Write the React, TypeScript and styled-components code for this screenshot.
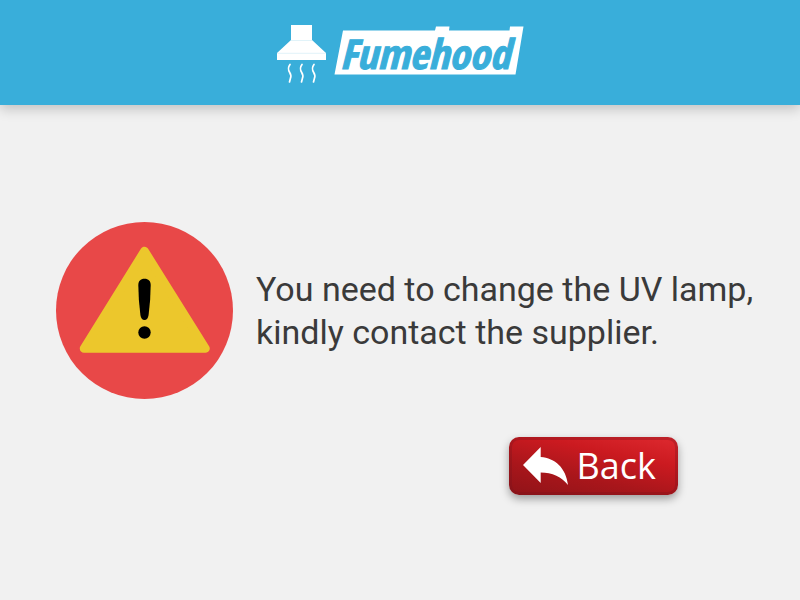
import React from "react";
import styled, { createGlobalStyle } from "styled-components";

const GlobalStyle = createGlobalStyle`
  *, *::before, *::after { box-sizing: border-box; }
  body {
    margin: 0;
    background: #f1f1f1;
    font-family: "Open Sans", "Noto Sans", sans-serif;
  }
`;

const Page = styled.div`
  display: flex;
  flex-direction: column;
  min-height: 100vh;
`;

const Header = styled.header`
  display: flex;
  justify-content: center;
  padding: 24px 16px 21px;
  background: #39aeda;
  box-shadow: 0 4px 12px rgba(0, 0, 0, 0.2);
`;

const Logo = styled.svg`
  display: block;
  width: 248px;
  height: 60px;
`;

const Wordmark = styled.text`
  font-family: "Open Sans Condensed", "Roboto Condensed", sans-serif;
  font-size: 41px;
  font-weight: 700;
  font-style: italic;
  fill: #39aeda;
  stroke: #39aeda;
  stroke-width: 1px;
`;

const Main = styled.main`
  display: flex;
  flex-direction: column;
  gap: 38px;
  padding: 117px 40px 40px 56px;
`;

const Alert = styled.section`
  display: flex;
  align-items: center;
  gap: 23px;
`;

const WarningIcon = styled.svg`
  flex: none;
  width: 177px;
  height: 177px;
`;

const Message = styled.p`
  flex: 1;
  margin: 0;
  color: #3a3a3a;
  font-family: "Roboto", sans-serif;
  font-size: 34px;
  font-weight: 400;
  line-height: 43px;
`;

const Actions = styled.div`
  display: flex;
  justify-content: flex-end;
  padding-right: 82px;
`;

const BackButton = styled.button`
  display: flex;
  align-items: center;
  gap: 8px;
  height: 58px;
  padding: 0 19px 0 11px;
  border: 3px solid rgba(120, 20, 30, 0.3);
  border-radius: 10px;
  background: linear-gradient(12deg, #8f1318 0%, #a9161b 35%, #cb1a20 68%, #df2a30 100%) border-box;
  box-shadow: 0 4px 8px rgba(0, 0, 0, 0.35);
  color: #fff;
  font-family: "Open Sans", "Noto Sans", sans-serif;
  font-size: 36px;
  line-height: 50px;
  cursor: pointer;
`;

const ArrowIcon = styled.svg`
  flex: none;
  width: 46px;
  height: 38px;
`;

function FumehoodLogo() {
  return (
    <Logo viewBox="276 24 248 60" role="img" aria-label="Fumehood">
      <path d="M291 25H312V40L326 53V60H277V53L291 40Z" fill="#fff" />
      <path d="M291 40.5H312M277 53.3H326" stroke="#d9f0f8" strokeWidth="0.8" />
      <g fill="none" stroke="#fff" strokeWidth="1.7" strokeLinecap="round">
        <path d="M290 64.500C285 71 293 73 290.500 78Q290 80 289.500 82" />
        <path d="M302 64.500C297 71 305 73 302.500 78Q302 80 301.500 82" />
        <path d="M314 64.500C309 71 317 73 314.500 78Q314 80 313.500 82" />
      </g>
      <path
        d="M343 30.500H435L436 26.500H449.500L449 30.500H509.500L510 26.500H523.500L515.500 74.500H334.500Z"
        fill="#fff"
      />
      <Wordmark x="340" y="69">Fumehood</Wordmark>
    </Logo>
  );
}

export default function App() {
  return (
    <>
      <GlobalStyle />
      <Page>
        <Header>
          <FumehoodLogo />
        </Header>
        <Main>
          <Alert role="alert">
            <WarningIcon viewBox="0 0 177 177" aria-hidden="true">
              <circle cx="88.500" cy="88.500" r="88.500" fill="#e84848" />
              <path
                d="M88.500 29L149.500 126.500H28Z"
                fill="#ecc72c"
                stroke="#ecc72c"
                strokeWidth="8.500"
                strokeLinejoin="round"
              />
              <path
                d="M82.300 63C82.300 59 84.500 56.700 88.500 56.700S94.700 59 94.700 63Q94.600 78 92.600 93C92 96.500 90.800 98 88.500 98S85 96.500 84.400 93Q82.400 78 82.300 63Z"
                fill="#000"
              />
              <circle cx="88.500" cy="110.500" r="6.200" fill="#000" />
            </WarningIcon>
            <Message>You need to change the UV lamp, kindly contact the supplier.</Message>
          </Alert>
          <Actions>
            <BackButton type="button">
              <ArrowIcon viewBox="0 0 46 38" aria-hidden="true">
                <path d="M0 18L17.700 0V10C32 11 43 21 45 38C39 30 29 25.500 17.700 25.500V36Z" fill="#fff" />
              </ArrowIcon>
              Back
            </BackButton>
          </Actions>
        </Main>
      </Page>
    </>
  );
}
